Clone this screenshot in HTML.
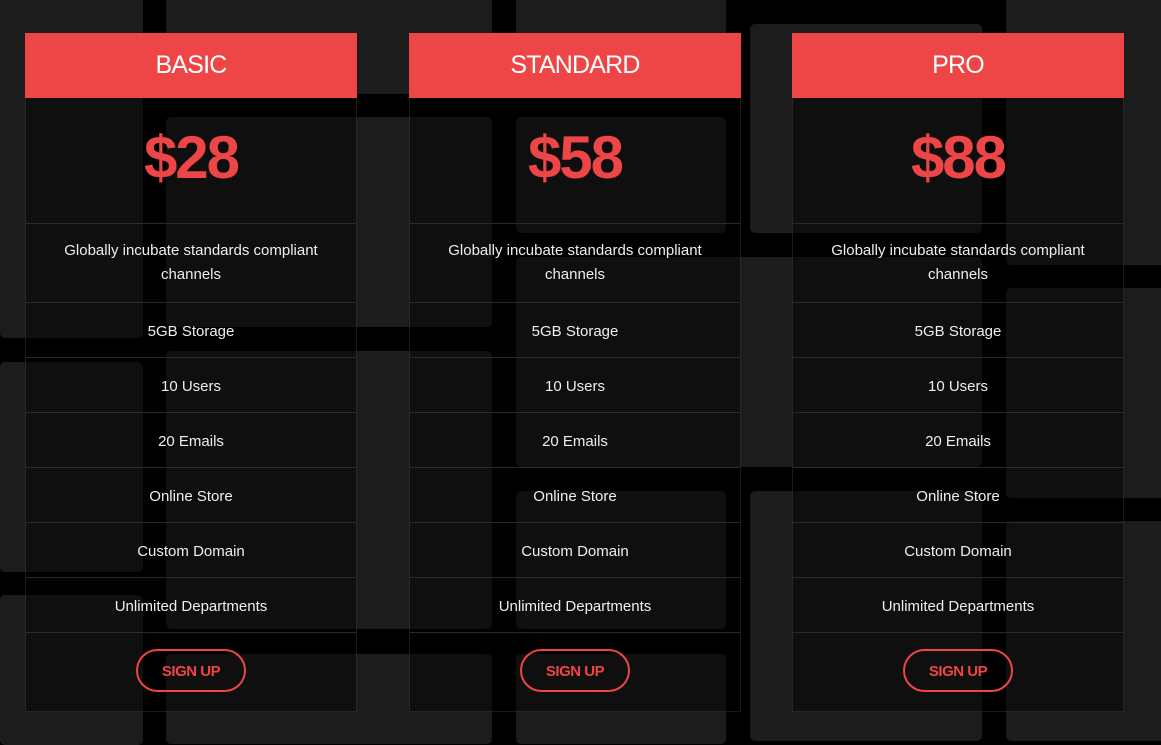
<!DOCTYPE html>
<html><head><meta charset="utf-8"><style>
*{margin:0;padding:0;box-sizing:border-box}
body{width:1161px;height:736px;background:#000;position:relative;overflow:hidden;font-family:"Liberation Sans",sans-serif}
.r{position:absolute;background:#1c1c1c;border-radius:5px}
.card{position:absolute;top:33px;width:332px;height:679px;background:rgba(0,0,0,0.45);border:1px solid rgba(255,255,255,0.1);border-top:none}
.hd{height:65px;background:#ee4546;color:#fff;text-align:center;font-size:25px;line-height:65px;letter-spacing:-0.8px;margin:0 -1px}
.pr{height:126px;color:#ee4546;text-align:center;font-size:60px;font-weight:bold;line-height:120px;letter-spacing:-2px;border-bottom:1px solid #2a2a2a}
.f{height:55px;color:#eee;text-align:center;font-size:15px;line-height:57px;border-bottom:1px solid #2a2a2a}
.f.d{height:79px;line-height:24px;padding-top:15px}
.bt{display:block;margin:16px auto 0;width:110px;height:43px;border:2px solid #ee4546;border-radius:22px;color:#ee4546;font-weight:bold;font-size:15px;text-align:center;line-height:41px;letter-spacing:-0.5px}
</style></head><body>
<div class="r" style="left:0;top:-5px;width:143px;height:343px"></div>
<div class="r" style="left:0;top:362px;width:143px;height:210px"></div>
<div class="r" style="left:0;top:595px;width:143px;height:150px"></div>
<div class="r" style="left:166px;top:-5px;width:326px;height:99px"></div>
<div class="r" style="left:166px;top:117px;width:326px;height:210px"></div>
<div class="r" style="left:166px;top:351px;width:326px;height:278px"></div>
<div class="r" style="left:166px;top:654px;width:326px;height:90px"></div>
<div class="r" style="left:516px;top:-5px;width:210px;height:99px"></div>
<div class="r" style="left:516px;top:117px;width:210px;height:116px"></div>
<div class="r" style="left:516px;top:257px;width:466px;height:210px"></div>
<div class="r" style="left:516px;top:491px;width:210px;height:138px"></div>
<div class="r" style="left:516px;top:654px;width:210px;height:90px"></div>
<div class="r" style="left:750px;top:24px;width:232px;height:209px"></div>
<div class="r" style="left:750px;top:491px;width:232px;height:250px"></div>
<div class="r" style="left:1006px;top:-5px;width:160px;height:270px"></div>
<div class="r" style="left:1006px;top:288px;width:160px;height:210px"></div>
<div class="r" style="left:1006px;top:521px;width:160px;height:220px"></div>

<div class="card" style="left:25px">
<div class="hd">BASIC</div><div class="pr">$28</div>
<div class="f d">Globally incubate standards compliant<br>channels</div>
<div class="f">5GB Storage</div><div class="f">10 Users</div><div class="f">20 Emails</div><div class="f">Online Store</div><div class="f">Custom Domain</div><div class="f">Unlimited Departments</div>
<div class="bt">SIGN UP</div></div>
<div class="card" style="left:409px">
<div class="hd">STANDARD</div><div class="pr">$58</div>
<div class="f d">Globally incubate standards compliant<br>channels</div>
<div class="f">5GB Storage</div><div class="f">10 Users</div><div class="f">20 Emails</div><div class="f">Online Store</div><div class="f">Custom Domain</div><div class="f">Unlimited Departments</div>
<div class="bt">SIGN UP</div></div>
<div class="card" style="left:792px">
<div class="hd">PRO</div><div class="pr">$88</div>
<div class="f d">Globally incubate standards compliant<br>channels</div>
<div class="f">5GB Storage</div><div class="f">10 Users</div><div class="f">20 Emails</div><div class="f">Online Store</div><div class="f">Custom Domain</div><div class="f">Unlimited Departments</div>
<div class="bt">SIGN UP</div></div>
</body></html>
